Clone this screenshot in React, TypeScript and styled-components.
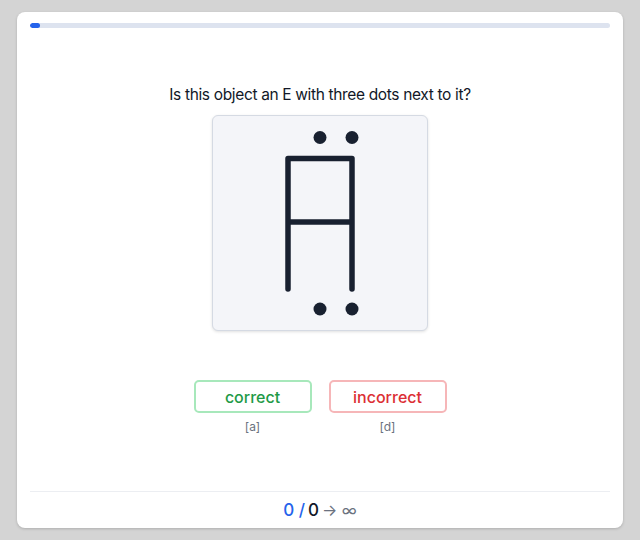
import styled, { createGlobalStyle } from "styled-components";

const GlobalStyle = createGlobalStyle`
  html, body {
    margin: 0;
    padding: 0;
    background: #d4d4d4;
    font-family: Inter, "Noto Sans", sans-serif;
  }
  body {
    padding: 12px 17px;
  }
`;

const Card = styled.div`
  height: 516px;
  box-sizing: border-box;
  background: #ffffff;
  border-radius: 8px;
  box-shadow: 0 1px 3px rgba(0, 0, 0, 0.18);
  padding: 11px 13px 0;
  display: flex;
  flex-direction: column;
`;

const Track = styled.div`
  height: 5px;
  border-radius: 3px;
  background: #dde3ef;
  overflow: hidden;
`;

const Fill = styled.div`
  height: 100%;
  background: #2563eb;
  border-radius: 3px;
`;

const Main = styled.div`
  flex: 1;
  display: flex;
  flex-direction: column;
  align-items: center;
  padding-top: 55px;
`;

const Question = styled.h2`
  margin: 0;
  font-size: 15.5px;
  letter-spacing: -0.35px;
  line-height: 24px;
  font-weight: 400;
  color: #111827;
`;

const Stimulus = styled.div`
  margin-top: 8px;
  width: 216px;
  height: 216px;
  box-sizing: border-box;
  background: #f4f5f9;
  border: 1px solid #d5dae3;
  border-radius: 6px;
  box-shadow: 0 1px 3px rgba(0, 0, 0, 0.12);
  display: flex;
`;

const Choices = styled.div`
  margin-top: 49px;
  display: flex;
  gap: 17px;
`;

const Choice = styled.div`
  display: flex;
  flex-direction: column;
  align-items: center;
  gap: 6px;
`;

const AnswerButton = styled.button<{ $tone: "good" | "bad" }>`
  width: 118px;
  height: 33px;
  background: #ffffff;
  border-radius: 5px;
  border: 2px solid ${(p) => (p.$tone === "good" ? "#a7e8bb" : "#f6b6b8")};
  color: ${(p) => (p.$tone === "good" ? "#1e9a47" : "#dc2f34")};
  font-family: Inter, "Noto Sans", sans-serif;
  font-size: 16px;
  font-weight: 500;
  cursor: pointer;
`;

const Key = styled.span`
  font-size: 12px;
  line-height: 16px;
  color: #6b7280;
`;

const Footer = styled.div`
  height: 36px;
  border-top: 1px solid #eceef2;
  display: flex;
  align-items: center;
  justify-content: center;
  gap: 3px;
  font-size: 17px;
  font-weight: 500;
`;

const Streak = styled.span`
  color: #2563eb;
`;

const Total = styled.span`
  color: #111827;
`;

const Goal = styled.span`
  color: #6b7280;
  font-size: 16px;
  font-weight: 400;
`;

const Figure = () => (
  <svg width="214" height="214" viewBox="0 0 214 214">
    <g fill="#182030">
      <circle cx="107" cy="21.5" r="6.5" />
      <circle cx="139" cy="21.5" r="6.5" />
      <circle cx="107" cy="193" r="6.5" />
      <circle cx="139" cy="193" r="6.5" />
    </g>
    <path
      d="M75 173 V42.5 H139 V173 M75 106 H139"
      fill="none"
      stroke="#182030"
      strokeWidth="5.5"
      strokeLinecap="round"
      strokeLinejoin="round"
    />
  </svg>
);

export default function App() {
  return (
    <>
      <GlobalStyle />
      <Card>
        <Track>
          <Fill style={{ width: `${(10 / 580) * 100}%` }} />
        </Track>
        <Main>
          <Question>Is this object an E with three dots next to it?</Question>
          <Stimulus>
            <Figure />
          </Stimulus>
          <Choices>
            <Choice>
              <AnswerButton $tone="good">correct</AnswerButton>
              <Key>[a]</Key>
            </Choice>
            <Choice>
              <AnswerButton $tone="bad">incorrect</AnswerButton>
              <Key>[d]</Key>
            </Choice>
          </Choices>
        </Main>
        <Footer>
          <Streak>0 /</Streak>
          <Total>0</Total>
          <Goal>→ ∞</Goal>
        </Footer>
      </Card>
    </>
  );
}
